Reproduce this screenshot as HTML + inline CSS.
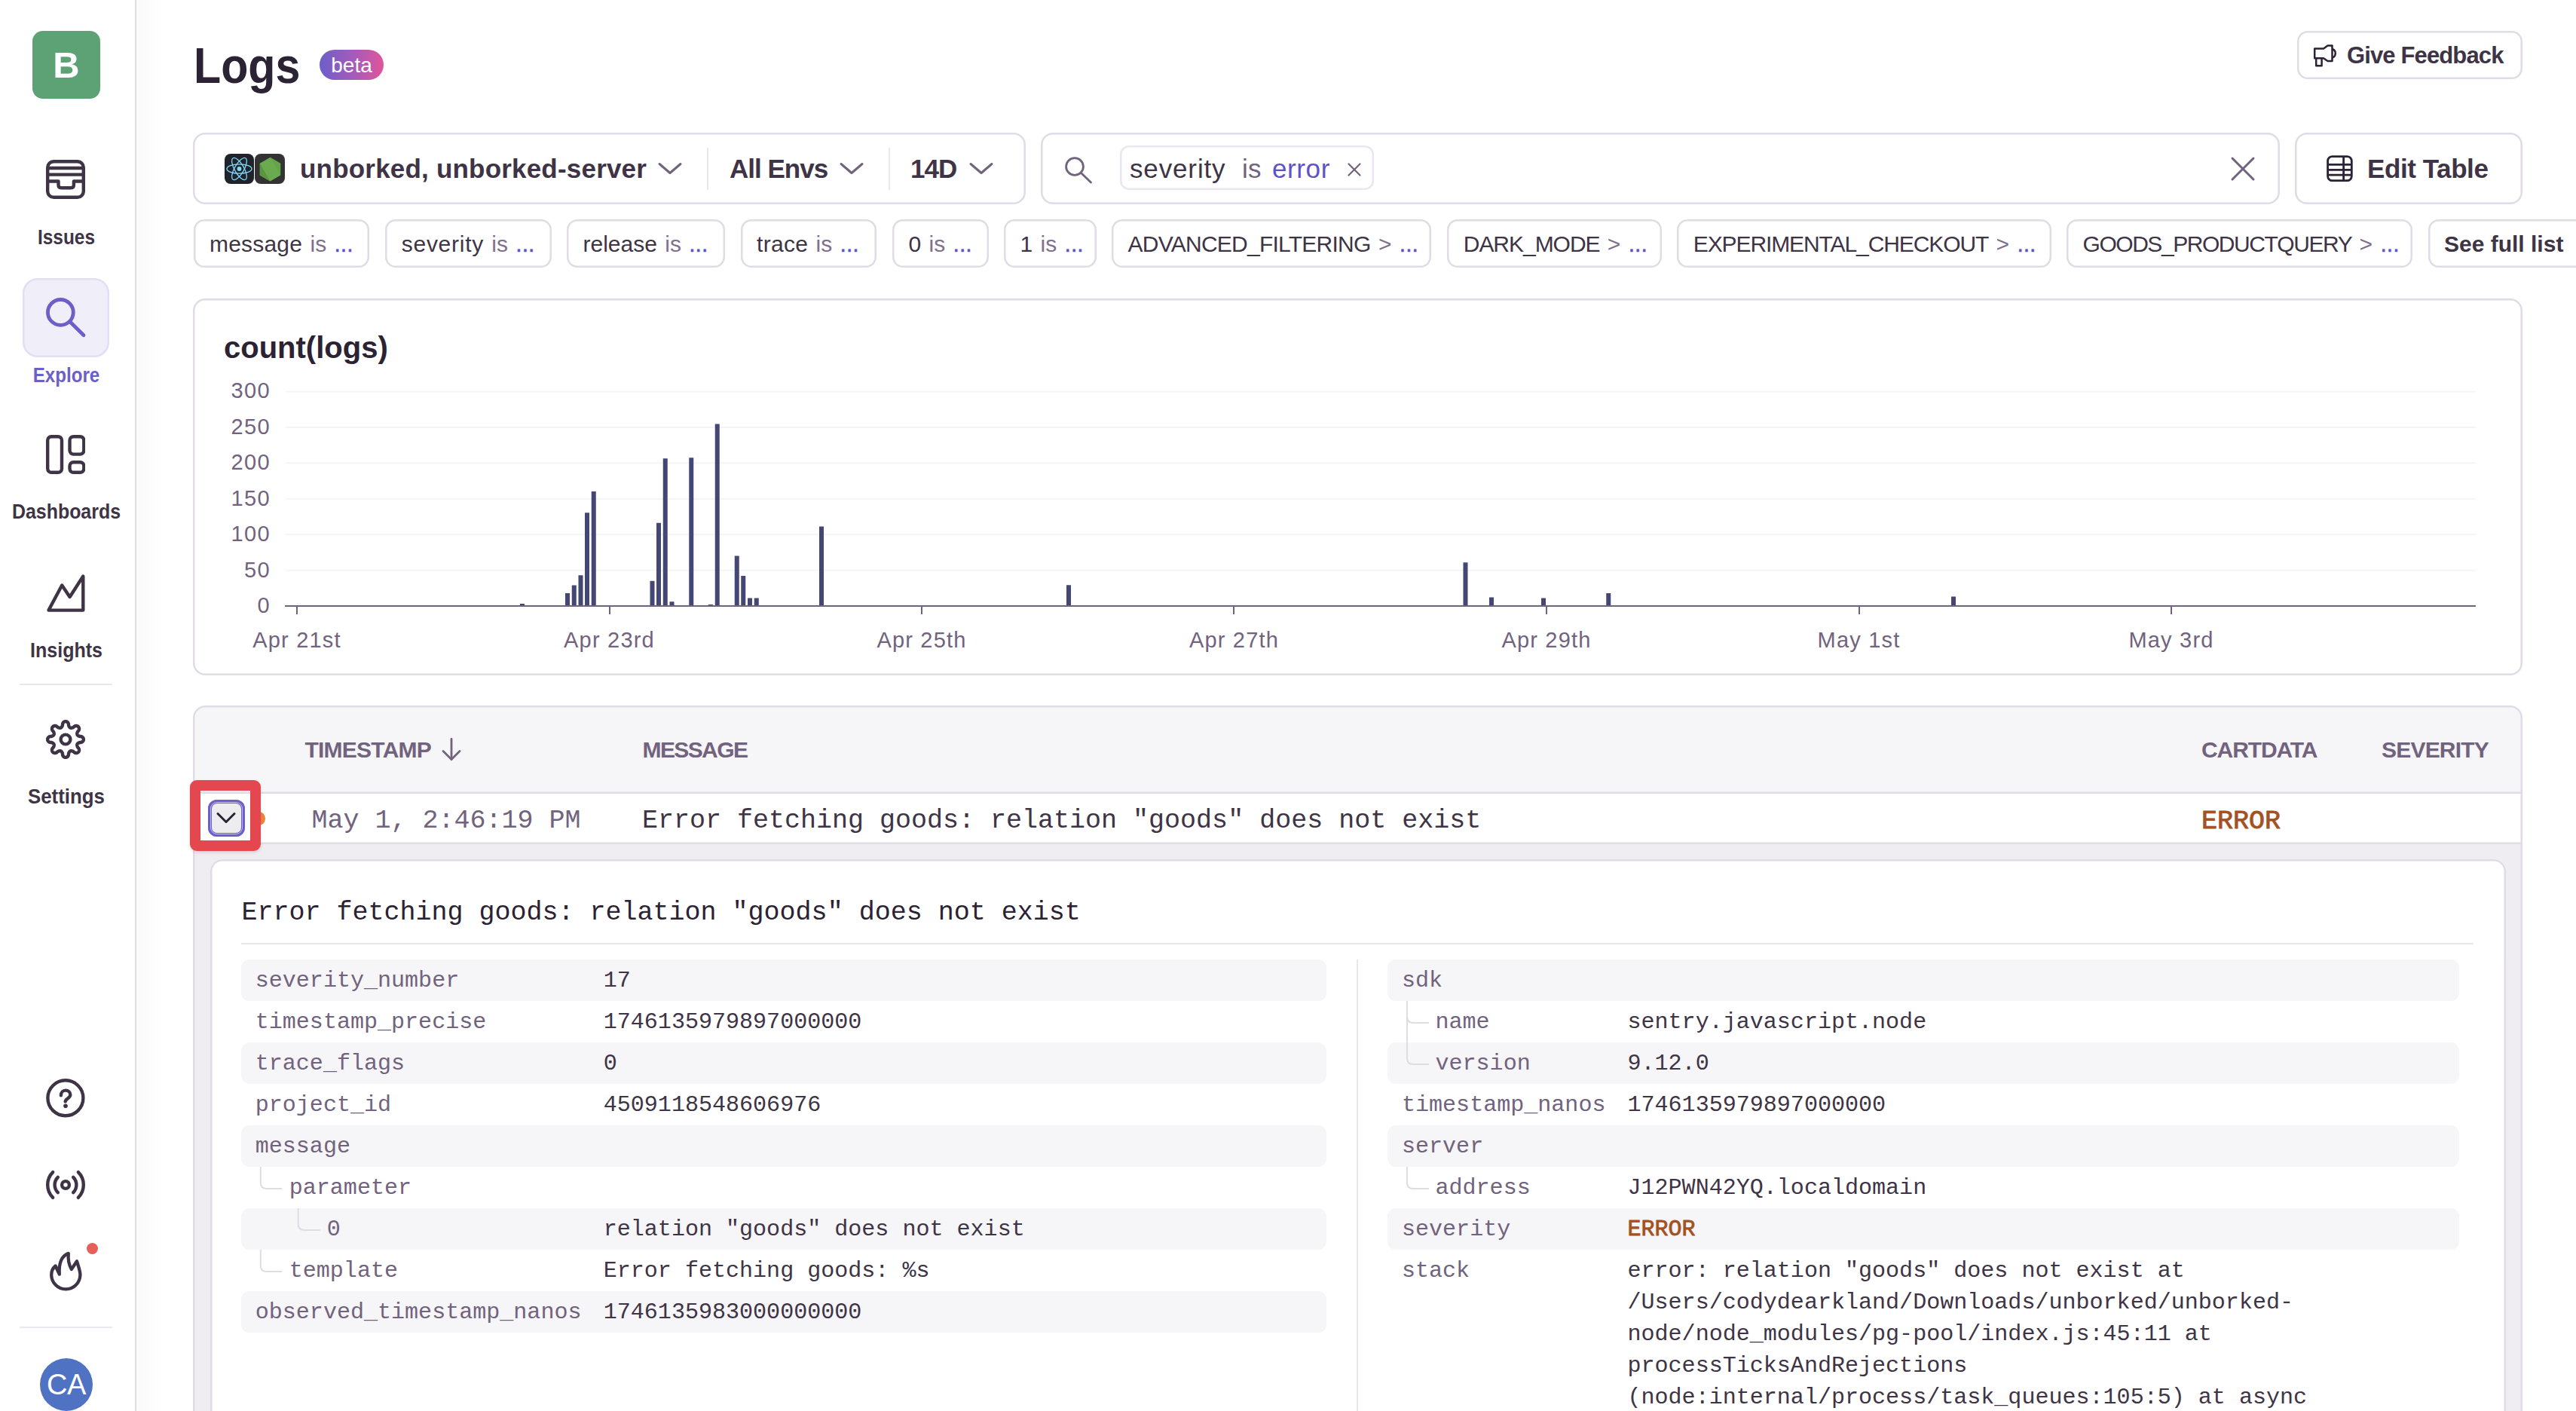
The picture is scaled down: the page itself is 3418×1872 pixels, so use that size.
<!DOCTYPE html><html><head><meta charset="utf-8"><title>Logs</title><style>
html,body{margin:0;padding:0;overflow:hidden;width:3418px;height:1872px;}
body{width:3418px;height:1872px;overflow:hidden;position:relative;background:#fff;font-family:"Liberation Sans",sans-serif;}
.t{position:absolute;white-space:pre;}
.b{position:absolute;box-sizing:border-box;}
#root{position:absolute;left:0;top:0;width:3418px;height:1872px;overflow:hidden;background:#fff;}
</style></head><body><div id="root">
<div class="b" style="left:0px;top:0px;width:179px;height:1872px;background:#fff"></div>
<div class="b" style="left:179px;top:0px;width:2px;height:1872px;background:#E0DCE5"></div>
<div class="b" style="left:181px;top:0px;width:40px;height:1872px;background:linear-gradient(90deg,rgba(0,0,0,0.018),rgba(0,0,0,0))"></div>
<div class="b" style="left:43px;top:41px;width:90px;height:90px;background:#5DA275;border-radius:14px"></div>
<div class="t" style="left:43px;top:41px;width:90px;height:90px;font:700 49px/90px 'Liberation Sans', sans-serif;color:#fff;text-align:center">B</div>
<svg class="b" style="left:61px;top:212px;" width="52" height="52" viewBox="0 0 52 52"><g fill="none" stroke="#3E3446" stroke-width="4.4" stroke-linejoin="round">
<rect x="2.2" y="2.2" width="47.6" height="47.6" rx="8"/>
<line x1="2" y1="11" x2="50" y2="11"/><line x1="2" y1="19.6" x2="50" y2="19.6"/>
<path d="M2,28.5 H16.5 V33.5 Q16.5,37.2 20.5,37.2 H33 Q36.9,37.2 36.9,33.5 V28.5 H50"/></g></svg>
<div class="t" style="left:0.00px;top:300.63px;font:700 27.6px/27.6px 'Liberation Sans', sans-serif;color:#3E3446;letter-spacing:0px;transform:scaleX(0.885);transform-origin:88px 0;width:176px;text-align:center;">Issues</div>
<div class="b" style="left:30px;top:369px;width:115.00px;height:105.00px;background:#F0EEF9;border-radius:20px;box-shadow:inset 0 0 0 2.5px #E3DFF3;"></div>
<svg class="b" style="left:55px;top:390px;" width="62" height="62" viewBox="0 0 62 62"><g fill="none" stroke="#6C5FC7" stroke-width="4.8" stroke-linecap="round">
<circle cx="25.35" cy="24.4" r="16.9"/><line x1="37.5" y1="36.5" x2="56" y2="54.7"/></g></svg>
<div class="t" style="left:0.00px;top:483.63px;font:700 27.6px/27.6px 'Liberation Sans', sans-serif;color:#6C5FC7;letter-spacing:0px;transform:scaleX(0.874);transform-origin:88px 0;width:176px;text-align:center;">Explore</div>
<svg class="b" style="left:61px;top:577px;" width="52" height="52" viewBox="0 0 52 52"><g fill="none" stroke="#3E3446" stroke-width="4.4">
<rect x="2.2" y="2.2" width="18.8" height="47.6" rx="5"/>
<rect x="31.5" y="2.2" width="18.8" height="23.4" rx="5"/>
<rect x="31.5" y="36.2" width="18.8" height="13.6" rx="5"/></g></svg>
<div class="t" style="left:0.00px;top:664.63px;font:700 27.6px/27.6px 'Liberation Sans', sans-serif;color:#3E3446;letter-spacing:0px;transform:scaleX(0.903);transform-origin:88px 0;width:176px;text-align:center;">Dashboards</div>
<svg class="b" style="left:61px;top:760px;" width="52" height="52" viewBox="0 0 52 52"><path d="M3.5,49.6 L21.2,16.5 L31.6,32 L49.3,4.5 V49.6 Z" fill="none" stroke="#3E3446" stroke-width="4.4" stroke-linejoin="round"/></svg>
<div class="t" style="left:0.00px;top:848.63px;font:700 27.6px/27.6px 'Liberation Sans', sans-serif;color:#3E3446;letter-spacing:0px;transform:scaleX(0.907);transform-origin:88px 0;width:176px;text-align:center;">Insights</div>
<div class="b" style="left:26px;top:907px;width:123px;height:2px;background:#EBE7F0"></div>
<svg class="b" style="left:61px;top:955px;" width="52" height="52" viewBox="0 0 52 52"><g fill="none" stroke="#3E3446" stroke-width="4.4" stroke-linejoin="round"><path d="M49.90,26.00 L49.88,26.38 L49.82,26.75 L49.72,27.12 L49.58,27.48 L49.40,27.84 L49.17,28.19 L48.91,28.53 L48.60,28.85 L48.23,29.16 L47.81,29.45 L47.30,29.72 L46.61,29.93 L45.21,29.98 L44.52,30.14 L44.01,30.32 L43.57,30.51 L43.19,30.70 L42.86,30.90 L42.56,31.09 L42.29,31.29 L42.06,31.50 L41.86,31.71 L41.69,31.93 L41.54,32.15 L41.43,32.39 L41.34,32.64 L41.28,32.90 L41.25,33.18 L41.24,33.47 L41.26,33.78 L41.31,34.11 L41.38,34.46 L41.48,34.83 L41.62,35.24 L41.79,35.68 L42.03,36.17 L42.40,36.77 L43.36,37.79 L43.69,38.43 L43.86,38.98 L43.96,39.48 L44.00,39.96 L43.99,40.41 L43.94,40.84 L43.85,41.24 L43.72,41.62 L43.56,41.98 L43.37,42.31 L43.15,42.62 L42.90,42.90 L42.62,43.15 L42.31,43.37 L41.98,43.56 L41.62,43.72 L41.24,43.85 L40.84,43.94 L40.41,43.99 L39.96,44.00 L39.48,43.96 L38.98,43.86 L38.43,43.69 L37.79,43.36 L36.77,42.40 L36.17,42.03 L35.68,41.79 L35.24,41.62 L34.83,41.48 L34.46,41.38 L34.11,41.31 L33.78,41.26 L33.47,41.24 L33.18,41.25 L32.90,41.28 L32.64,41.34 L32.39,41.43 L32.15,41.54 L31.93,41.69 L31.71,41.86 L31.50,42.06 L31.29,42.29 L31.09,42.56 L30.90,42.86 L30.70,43.19 L30.51,43.57 L30.32,44.01 L30.14,44.52 L29.98,45.21 L29.93,46.61 L29.72,47.30 L29.45,47.81 L29.16,48.23 L28.85,48.60 L28.53,48.91 L28.19,49.17 L27.84,49.40 L27.48,49.58 L27.12,49.72 L26.75,49.82 L26.38,49.88 L26.00,49.90 L25.62,49.88 L25.25,49.82 L24.88,49.72 L24.52,49.58 L24.16,49.40 L23.81,49.17 L23.47,48.91 L23.15,48.60 L22.84,48.23 L22.55,47.81 L22.28,47.30 L22.07,46.61 L22.02,45.21 L21.86,44.52 L21.68,44.01 L21.49,43.57 L21.30,43.19 L21.10,42.86 L20.91,42.56 L20.71,42.29 L20.50,42.06 L20.29,41.86 L20.07,41.69 L19.85,41.54 L19.61,41.43 L19.36,41.34 L19.10,41.28 L18.82,41.25 L18.53,41.24 L18.22,41.26 L17.89,41.31 L17.54,41.38 L17.17,41.48 L16.76,41.62 L16.32,41.79 L15.83,42.03 L15.23,42.40 L14.21,43.36 L13.57,43.69 L13.02,43.86 L12.52,43.96 L12.04,44.00 L11.59,43.99 L11.16,43.94 L10.76,43.85 L10.38,43.72 L10.02,43.56 L9.69,43.37 L9.38,43.15 L9.10,42.90 L8.85,42.62 L8.63,42.31 L8.44,41.98 L8.28,41.62 L8.15,41.24 L8.06,40.84 L8.01,40.41 L8.00,39.96 L8.04,39.48 L8.14,38.98 L8.31,38.43 L8.64,37.79 L9.60,36.77 L9.97,36.17 L10.21,35.68 L10.38,35.24 L10.52,34.83 L10.62,34.46 L10.69,34.11 L10.74,33.78 L10.76,33.47 L10.75,33.18 L10.72,32.90 L10.66,32.64 L10.57,32.39 L10.46,32.15 L10.31,31.93 L10.14,31.71 L9.94,31.50 L9.71,31.29 L9.44,31.09 L9.14,30.90 L8.81,30.70 L8.43,30.51 L7.99,30.32 L7.48,30.14 L6.79,29.98 L5.39,29.93 L4.70,29.72 L4.19,29.45 L3.77,29.16 L3.40,28.85 L3.09,28.53 L2.83,28.19 L2.60,27.84 L2.42,27.48 L2.28,27.12 L2.18,26.75 L2.12,26.38 L2.10,26.00 L2.12,25.62 L2.18,25.25 L2.28,24.88 L2.42,24.52 L2.60,24.16 L2.83,23.81 L3.09,23.47 L3.40,23.15 L3.77,22.84 L4.19,22.55 L4.70,22.28 L5.39,22.07 L6.79,22.02 L7.48,21.86 L7.99,21.68 L8.43,21.49 L8.81,21.30 L9.14,21.10 L9.44,20.91 L9.71,20.71 L9.94,20.50 L10.14,20.29 L10.31,20.07 L10.46,19.85 L10.57,19.61 L10.66,19.36 L10.72,19.10 L10.75,18.82 L10.76,18.53 L10.74,18.22 L10.69,17.89 L10.62,17.54 L10.52,17.17 L10.38,16.76 L10.21,16.32 L9.97,15.83 L9.60,15.23 L8.64,14.21 L8.31,13.57 L8.14,13.02 L8.04,12.52 L8.00,12.04 L8.01,11.59 L8.06,11.16 L8.15,10.76 L8.28,10.38 L8.44,10.02 L8.63,9.69 L8.85,9.38 L9.10,9.10 L9.38,8.85 L9.69,8.63 L10.02,8.44 L10.38,8.28 L10.76,8.15 L11.16,8.06 L11.59,8.01 L12.04,8.00 L12.52,8.04 L13.02,8.14 L13.57,8.31 L14.21,8.64 L15.23,9.60 L15.83,9.97 L16.32,10.21 L16.76,10.38 L17.17,10.52 L17.54,10.62 L17.89,10.69 L18.22,10.74 L18.53,10.76 L18.82,10.75 L19.10,10.72 L19.36,10.66 L19.61,10.57 L19.85,10.46 L20.07,10.31 L20.29,10.14 L20.50,9.94 L20.71,9.71 L20.91,9.44 L21.10,9.14 L21.30,8.81 L21.49,8.43 L21.68,7.99 L21.86,7.48 L22.02,6.79 L22.07,5.39 L22.28,4.70 L22.55,4.19 L22.84,3.77 L23.15,3.40 L23.47,3.09 L23.81,2.83 L24.16,2.60 L24.52,2.42 L24.88,2.28 L25.25,2.18 L25.62,2.12 L26.00,2.10 L26.38,2.12 L26.75,2.18 L27.12,2.28 L27.48,2.42 L27.84,2.60 L28.19,2.83 L28.53,3.09 L28.85,3.40 L29.16,3.77 L29.45,4.19 L29.72,4.70 L29.93,5.39 L29.98,6.79 L30.14,7.48 L30.32,7.99 L30.51,8.43 L30.70,8.81 L30.90,9.14 L31.09,9.44 L31.29,9.71 L31.50,9.94 L31.71,10.14 L31.93,10.31 L32.15,10.46 L32.39,10.57 L32.64,10.66 L32.90,10.72 L33.18,10.75 L33.47,10.76 L33.78,10.74 L34.11,10.69 L34.46,10.62 L34.83,10.52 L35.24,10.38 L35.68,10.21 L36.17,9.97 L36.77,9.60 L37.79,8.64 L38.43,8.31 L38.98,8.14 L39.48,8.04 L39.96,8.00 L40.41,8.01 L40.84,8.06 L41.24,8.15 L41.62,8.28 L41.98,8.44 L42.31,8.63 L42.62,8.85 L42.90,9.10 L43.15,9.38 L43.37,9.69 L43.56,10.02 L43.72,10.38 L43.85,10.76 L43.94,11.16 L43.99,11.59 L44.00,12.04 L43.96,12.52 L43.86,13.02 L43.69,13.57 L43.36,14.21 L42.40,15.23 L42.03,15.83 L41.79,16.32 L41.62,16.76 L41.48,17.17 L41.38,17.54 L41.31,17.89 L41.26,18.22 L41.24,18.53 L41.25,18.82 L41.28,19.10 L41.34,19.36 L41.43,19.61 L41.54,19.85 L41.69,20.07 L41.86,20.29 L42.06,20.50 L42.29,20.71 L42.56,20.91 L42.86,21.10 L43.19,21.30 L43.57,21.49 L44.01,21.68 L44.52,21.86 L45.21,22.02 L46.61,22.07 L47.30,22.28 L47.81,22.55 L48.23,22.84 L48.60,23.15 L48.91,23.47 L49.17,23.81 L49.40,24.16 L49.58,24.52 L49.72,24.88 L49.82,25.25 L49.88,25.62 L49.90,26.00Z"/><circle cx="26" cy="26" r="6.4"/></g></svg>
<div class="t" style="left:0.00px;top:1043.13px;font:700 27.6px/27.6px 'Liberation Sans', sans-serif;color:#3E3446;letter-spacing:0px;transform:scaleX(0.937);transform-origin:88px 0;width:176px;text-align:center;">Settings</div>
<svg class="b" style="left:61px;top:1431px;" width="52" height="52" viewBox="0 0 52 52"><g fill="none" stroke="#3E3446" stroke-width="4.4" stroke-linecap="round">
<circle cx="25.9" cy="25.8" r="23.5"/>
<path d="M19.9,22.2 C19.9,18.3 22.6,15.6 26,15.6 C29.6,15.6 32.3,18.2 32.3,21.4 C32.3,25.6 25.7,27 25.7,30.4"/></g>
<circle cx="26" cy="36.3" r="2.8" fill="#3E3446"/></svg>
<svg class="b" style="left:57px;top:1542px;" width="60" height="60" viewBox="0 0 60 60"><g fill="none" stroke="#3E3446" stroke-width="4.4" stroke-linecap="round"><path d="M19.82,40.18 A14.4,14.4 0 0 1 19.82,19.82"/><path d="M40.18,19.82 A14.4,14.4 0 0 1 40.18,40.18"/><path d="M13.17,46.83 A23.8,23.8 0 0 1 13.17,13.17"/><path d="M46.83,13.17 A23.8,23.8 0 0 1 46.83,46.83"/><circle cx="30" cy="30" r="4.9"/></g></svg>
<svg class="b" style="left:61px;top:1655px;" width="52" height="62" viewBox="0 0 52 62"><path d="M17.80,35.60 L12.60,24.50 C9.00,27.50 7.20,32.00 7.20,36.20 A19.1,19.1 0 0 0 45.40,36.20 C45.40,31.00 43.00,25.00 41.00,18.30 L33.80,29.00 C30.30,23.00 29.20,15.00 29.80,7.80 C23.00,10.50 16.60,18.00 17.80,35.60 Z" fill="none" stroke="#3E3446" stroke-width="4.3" stroke-linejoin="round"/></svg>
<div class="b" style="left:115px;top:1649px;width:15px;height:15px;background:#E5605A;border-radius:50%"></div>
<div class="b" style="left:26px;top:1760px;width:123px;height:2px;background:#EBE7F0"></div>
<div class="b" style="left:53px;top:1802px;width:70px;height:70px;background:#4F72C3;border-radius:50%"></div>
<div class="t" style="left:53px;top:1802px;width:70px;height:70px;font:400 38px/70px 'Liberation Sans', sans-serif;color:#fff;text-align:center;letter-spacing:-0.5px">CA</div>
<div class="t" style="left:256.50px;top:52.77px;font:700 67px/67px 'Liberation Sans', sans-serif;color:#2B2233;letter-spacing:0px;transform:scaleX(0.884);transform-origin:left;">Logs</div>
<div class="b" style="left:424px;top:66px;width:85px;height:40px;background:linear-gradient(90deg,#6C5FC9 0%,#A75BB9 55%,#E1559B 100%);border-radius:20px"></div>
<div class="t" style="left:424.00px;top:73.29px;font:400 28px/28px 'Liberation Sans', sans-serif;color:#fff;letter-spacing:0px;width:85px;text-align:center;">beta</div>
<div class="b" style="left:3048px;top:41px;width:299.00px;height:64.00px;background:#fff;border-radius:14px;box-shadow:inset 0 0 0 2.5px #E0DCE5;"></div>
<svg class="b" style="left:3066px;top:56px;" width="38" height="36" viewBox="0 0 38 36"><g fill="none" stroke="#2B2233" stroke-width="2.5" stroke-linejoin="round">
<path d="M5.2,8.5 H17 L22.5,4.6 H28.5 V25 H22.5 L17,21.3 H5.2 Z"/>
<path d="M7.2,21.3 V31.3 H14.6 V21.3"/>
<path d="M28.5,9 A6,6 0 0 1 28.5,20.5"/></g></svg>
<div class="t" style="left:3114.00px;top:58.00px;font:700 31px/31px 'Liberation Sans', sans-serif;color:#3E3446;letter-spacing:-0.87px;">Give Feedback</div>
<div class="b" style="left:256px;top:176px;width:1105.00px;height:95.00px;background:#fff;border-radius:16px;box-shadow:inset 0 0 0 2.5px #E0DCE5;"></div>
<div class="b" style="left:298px;top:204px;width:39px;height:40px;background:#20232A;border-radius:8px"></div>
<svg class="b" style="left:298px;top:204px;" width="39" height="40" viewBox="0 0 39 40"><g fill="none" stroke="#7FD8F9" stroke-width="1.3"><ellipse cx="19.5" cy="20" rx="16.5" ry="6.2"/>
<ellipse cx="19.5" cy="20" rx="16.5" ry="6.2" transform="rotate(60 19.5 20)"/><ellipse cx="19.5" cy="20" rx="16.5" ry="6.2" transform="rotate(120 19.5 20)"/></g>
<circle cx="19.5" cy="20" r="2.9" fill="#7FD8F9"/></svg>
<div class="b" style="left:338px;top:204px;width:40px;height:40px;background:#333333;border-radius:8px"></div>
<svg class="b" style="left:338px;top:204px;" width="40" height="40" viewBox="0 0 40 40"><polygon points="20.5,4.8 34.2,12.7 34.2,28.5 20.5,36.4 6.8,28.5 6.8,12.7" fill="#6AAB50"/>
<polygon points="6.8,12.7 20.5,36.4 6.8,28.5" fill="#5A9640"/><polygon points="20.5,4.8 34.2,12.7 34.2,28.5" fill="#62A048" opacity="0.6"/></svg>
<div class="t" style="left:398.00px;top:205.87px;font:700 35px/35px 'Liberation Sans', sans-serif;color:#3E3446;letter-spacing:0.2px;">unborked, unborked-server</div>
<svg class="b" style="left:871.5px;top:213px;" width="34" height="21" viewBox="0 0 34 21"><polyline points="3,4.5 17.0,16.5 31,4.5" fill="none" stroke="#71637E" stroke-width="3" stroke-linecap="round" stroke-linejoin="round"/></svg>
<div class="b" style="left:938px;top:196px;width:2px;height:56px;background:#EBE7F0"></div>
<div class="t" style="left:968.00px;top:206.12px;font:700 35px/35px 'Liberation Sans', sans-serif;color:#3E3446;letter-spacing:-1px;">All Envs</div>
<svg class="b" style="left:1112.5px;top:213px;" width="34" height="21" viewBox="0 0 34 21"><polyline points="3,4.5 17.0,16.5 31,4.5" fill="none" stroke="#71637E" stroke-width="3" stroke-linecap="round" stroke-linejoin="round"/></svg>
<div class="b" style="left:1179px;top:196px;width:2px;height:56px;background:#EBE7F0"></div>
<div class="t" style="left:1208.00px;top:206.27px;font:700 35px/35px 'Liberation Sans', sans-serif;color:#3E3446;letter-spacing:-1px;">14D</div>
<svg class="b" style="left:1284.5px;top:213px;" width="34" height="21" viewBox="0 0 34 21"><polyline points="3,4.5 17.0,16.5 31,4.5" fill="none" stroke="#71637E" stroke-width="3" stroke-linecap="round" stroke-linejoin="round"/></svg>
<div class="b" style="left:1381px;top:176px;width:1644.00px;height:95.00px;background:#fff;border-radius:16px;box-shadow:inset 0 0 0 2.5px #E0DCE5,inset 0 3px 3px rgba(43,34,51,0.03);"></div>
<svg class="b" style="left:1410px;top:205px;" width="42" height="42" viewBox="0 0 42 42"><g fill="none" stroke="#71637E" stroke-width="2.8" stroke-linecap="round"><circle cx="16" cy="16" r="11.4"/><line x1="24.2" y1="24.2" x2="37.5" y2="37"/></g></svg>
<div class="b" style="left:1486px;top:193px;width:337.00px;height:59.00px;background:#fff;border-radius:12px;box-shadow:inset 0 0 0 2.5px #EBE7F0;"></div>
<div class="t" style="left:1499.00px;top:205.87px;font:400 35px/35px 'Liberation Sans', sans-serif;color:#3E3446;letter-spacing:0.86px;">severity</div>
<div class="t" style="left:1648.00px;top:205.87px;font:400 35px/35px 'Liberation Sans', sans-serif;color:#71637E;letter-spacing:0.3px;">is</div>
<div class="t" style="left:1688.00px;top:205.87px;font:400 35px/35px 'Liberation Sans', sans-serif;color:#5E52C9;letter-spacing:0.6px;">error</div>
<svg class="b" style="left:1786px;top:214px;" width="22" height="22" viewBox="0 0 22 22"><g stroke="#71637E" stroke-width="2.2" stroke-linecap="round"><line x1="3.5" y1="3.5" x2="18.5" y2="18.5"/><line x1="18.5" y1="3.5" x2="3.5" y2="18.5"/></g></svg>
<svg class="b" style="left:2957px;top:205px;" width="38" height="38" viewBox="0 0 38 38"><g stroke="#71637E" stroke-width="3" stroke-linecap="round"><line x1="5" y1="5" x2="33" y2="33"/><line x1="33" y1="5" x2="5" y2="33"/></g></svg>
<div class="b" style="left:3045px;top:176px;width:302.00px;height:95.00px;background:#fff;border-radius:16px;box-shadow:inset 0 0 0 2.5px #E0DCE5;"></div>
<svg class="b" style="left:3084px;top:203px;" width="41" height="41" viewBox="0 0 41 41"><g fill="none" stroke="#2B2233" stroke-width="2.8"><rect x="4.6" y="4.6" width="31.7" height="32.1" rx="6"/>
<line x1="4.6" y1="15.4" x2="36.3" y2="15.4"/><line x1="4.6" y1="22.3" x2="36.3" y2="22.3"/><line x1="4.6" y1="29.2" x2="36.3" y2="29.2"/>
<line x1="25.6" y1="4.6" x2="25.6" y2="36.7"/></g></svg>
<div class="t" style="left:3141.00px;top:206.12px;font:700 35px/35px 'Liberation Sans', sans-serif;color:#3E3446;letter-spacing:-0.42px;">Edit Table</div>
<div class="b" style="left:257px;top:291px;width:233.00px;height:64.00px;background:#fff;border-radius:14px;box-shadow:inset 0 0 0 2.5px #E0DCE5;"></div>
<div class="t" style="left:278.00px;top:309.10px;font:400 30px/30px 'Liberation Sans', sans-serif;color:#3E3446;word-spacing:2px"><span style="letter-spacing:0.2px">message</span> <span style="color:#80708F">is</span> <span style="color:#5B4FD0;-webkit-text-stroke:0.5px #5B4FD0">...</span></div>
<div class="b" style="left:511px;top:291px;width:221.00px;height:64.00px;background:#fff;border-radius:14px;box-shadow:inset 0 0 0 2.5px #E0DCE5;"></div>
<div class="t" style="left:532.75px;top:309.10px;font:400 30px/30px 'Liberation Sans', sans-serif;color:#3E3446;word-spacing:2px"><span style="letter-spacing:0.73px">severity</span> <span style="color:#80708F">is</span> <span style="color:#5B4FD0;-webkit-text-stroke:0.5px #5B4FD0">...</span></div>
<div class="b" style="left:752px;top:291px;width:210.00px;height:64.00px;background:#fff;border-radius:14px;box-shadow:inset 0 0 0 2.5px #E0DCE5;"></div>
<div class="t" style="left:773.50px;top:309.10px;font:400 30px/30px 'Liberation Sans', sans-serif;color:#3E3446;word-spacing:2px"><span style="letter-spacing:0px">release</span> <span style="color:#80708F">is</span> <span style="color:#5B4FD0;-webkit-text-stroke:0.5px #5B4FD0">...</span></div>
<div class="b" style="left:983px;top:291px;width:180.00px;height:64.00px;background:#fff;border-radius:14px;box-shadow:inset 0 0 0 2.5px #E0DCE5;"></div>
<div class="t" style="left:1004.00px;top:309.10px;font:400 30px/30px 'Liberation Sans', sans-serif;color:#3E3446;word-spacing:2px"><span style="letter-spacing:0.3px">trace</span> <span style="color:#80708F">is</span> <span style="color:#5B4FD0;-webkit-text-stroke:0.5px #5B4FD0">...</span></div>
<div class="b" style="left:1184px;top:291px;width:128.00px;height:64.00px;background:#fff;border-radius:14px;box-shadow:inset 0 0 0 2.5px #E0DCE5;"></div>
<div class="t" style="left:1205.50px;top:309.10px;font:400 30px/30px 'Liberation Sans', sans-serif;color:#3E3446;word-spacing:2px"><span style="letter-spacing:0px">0</span> <span style="color:#80708F">is</span> <span style="color:#5B4FD0;-webkit-text-stroke:0.5px #5B4FD0">...</span></div>
<div class="b" style="left:1332px;top:291px;width:123.00px;height:64.00px;background:#fff;border-radius:14px;box-shadow:inset 0 0 0 2.5px #E0DCE5;"></div>
<div class="t" style="left:1353.50px;top:309.10px;font:400 30px/30px 'Liberation Sans', sans-serif;color:#3E3446;word-spacing:2px"><span style="letter-spacing:0px">1</span> <span style="color:#80708F">is</span> <span style="color:#5B4FD0;-webkit-text-stroke:0.5px #5B4FD0">...</span></div>
<div class="b" style="left:1475px;top:291px;width:424.00px;height:64.00px;background:#fff;border-radius:14px;box-shadow:inset 0 0 0 2.5px #E0DCE5;"></div>
<div class="t" style="left:1496.50px;top:309.10px;font:400 30px/30px 'Liberation Sans', sans-serif;color:#3E3446;word-spacing:2px"><span style="letter-spacing:-0.75px">ADVANCED_FILTERING</span> <span style="color:#80708F">&gt;</span> <span style="color:#5B4FD0;-webkit-text-stroke:0.5px #5B4FD0">...</span></div>
<div class="b" style="left:1920px;top:291px;width:285.00px;height:64.00px;background:#fff;border-radius:14px;box-shadow:inset 0 0 0 2.5px #E0DCE5;"></div>
<div class="t" style="left:1941.75px;top:309.10px;font:400 30px/30px 'Liberation Sans', sans-serif;color:#3E3446;word-spacing:2px"><span style="letter-spacing:-1.03px">DARK_MODE</span> <span style="color:#80708F">&gt;</span> <span style="color:#5B4FD0;-webkit-text-stroke:0.5px #5B4FD0">...</span></div>
<div class="b" style="left:2225px;top:291px;width:497.00px;height:64.00px;background:#fff;border-radius:14px;box-shadow:inset 0 0 0 2.5px #E0DCE5;"></div>
<div class="t" style="left:2246.75px;top:309.10px;font:400 30px/30px 'Liberation Sans', sans-serif;color:#3E3446;word-spacing:2px"><span style="letter-spacing:-1.1px">EXPERIMENTAL_CHECKOUT</span> <span style="color:#80708F">&gt;</span> <span style="color:#5B4FD0;-webkit-text-stroke:0.5px #5B4FD0">...</span></div>
<div class="b" style="left:2742px;top:291px;width:459.00px;height:64.00px;background:#fff;border-radius:14px;box-shadow:inset 0 0 0 2.5px #E0DCE5;"></div>
<div class="t" style="left:2763.50px;top:309.10px;font:400 30px/30px 'Liberation Sans', sans-serif;color:#3E3446;word-spacing:2px"><span style="letter-spacing:-1.45px">GOODS_PRODUCTQUERY</span> <span style="color:#80708F">&gt;</span> <span style="color:#5B4FD0;-webkit-text-stroke:0.5px #5B4FD0">...</span></div>
<div class="b" style="left:3222px;top:291px;width:278.00px;height:64.00px;background:#fff;border-radius:14px;box-shadow:inset 0 0 0 2.5px #E0DCE5;"></div>
<div class="t" style="left:3243.00px;top:309.10px;font:700 30px/30px 'Liberation Sans', sans-serif;color:#3E3446;letter-spacing:0px;">See full list</div>
<div class="b" style="left:256px;top:396px;width:3091.00px;height:500.00px;background:#fff;border-radius:16px;box-shadow:inset 0 0 0 2.5px #E0DCE5;"></div>
<div class="t" style="left:297.00px;top:441.13px;font:700 40px/40px 'Liberation Sans', sans-serif;color:#2B2233;letter-spacing:0px;">count(logs)</div>
<div class="t" style="left:200.00px;top:504.45px;font:400 29px/29px 'Liberation Sans', sans-serif;color:#71637E;letter-spacing:1.4px;width:159px;text-align:right;">300</div>
<div class="t" style="left:200.00px;top:551.87px;font:400 29px/29px 'Liberation Sans', sans-serif;color:#71637E;letter-spacing:1.4px;width:159px;text-align:right;">250</div>
<div class="t" style="left:200.00px;top:599.29px;font:400 29px/29px 'Liberation Sans', sans-serif;color:#71637E;letter-spacing:1.4px;width:159px;text-align:right;">200</div>
<div class="t" style="left:200.00px;top:646.71px;font:400 29px/29px 'Liberation Sans', sans-serif;color:#71637E;letter-spacing:1.4px;width:159px;text-align:right;">150</div>
<div class="t" style="left:200.00px;top:694.13px;font:400 29px/29px 'Liberation Sans', sans-serif;color:#71637E;letter-spacing:1.4px;width:159px;text-align:right;">100</div>
<div class="t" style="left:200.00px;top:741.55px;font:400 29px/29px 'Liberation Sans', sans-serif;color:#71637E;letter-spacing:1.4px;width:159px;text-align:right;">50</div>
<div class="t" style="left:200.00px;top:788.97px;font:400 29px/29px 'Liberation Sans', sans-serif;color:#71637E;letter-spacing:1.4px;width:159px;text-align:right;">0</div>
<svg class="b" style="left:379px;top:397px;" width="2906" height="450" viewBox="0 0 2906 450"><rect x="0" y="121.50" width="2906" height="2" fill="#F5F4F7"/><rect x="0" y="168.92" width="2906" height="2" fill="#F5F4F7"/><rect x="0" y="216.34" width="2906" height="2" fill="#F5F4F7"/><rect x="0" y="263.76" width="2906" height="2" fill="#F5F4F7"/><rect x="0" y="311.18" width="2906" height="2" fill="#F5F4F7"/><rect x="0" y="358.60" width="2906" height="2" fill="#F5F4F7"/></svg>
<div class="b" style="left:378px;top:803px;width:2907px;height:2px;background:#71637E"></div>
<div class="b" style="left:393px;top:805px;width:2px;height:10px;background:#71637E"></div>
<div class="t" style="left:294.00px;top:835.45px;font:400 29px/29px 'Liberation Sans', sans-serif;color:#71637E;letter-spacing:1.2px;width:200px;text-align:center;">Apr 21st</div>
<div class="b" style="left:808px;top:805px;width:2px;height:10px;background:#71637E"></div>
<div class="t" style="left:708.50px;top:835.45px;font:400 29px/29px 'Liberation Sans', sans-serif;color:#71637E;letter-spacing:1.2px;width:200px;text-align:center;">Apr 23rd</div>
<div class="b" style="left:1222px;top:805px;width:2px;height:10px;background:#71637E"></div>
<div class="t" style="left:1123.00px;top:835.45px;font:400 29px/29px 'Liberation Sans', sans-serif;color:#71637E;letter-spacing:1.2px;width:200px;text-align:center;">Apr 25th</div>
<div class="b" style="left:1636px;top:805px;width:2px;height:10px;background:#71637E"></div>
<div class="t" style="left:1537.50px;top:835.45px;font:400 29px/29px 'Liberation Sans', sans-serif;color:#71637E;letter-spacing:1.2px;width:200px;text-align:center;">Apr 27th</div>
<div class="b" style="left:2051px;top:805px;width:2px;height:10px;background:#71637E"></div>
<div class="t" style="left:1952.00px;top:835.45px;font:400 29px/29px 'Liberation Sans', sans-serif;color:#71637E;letter-spacing:1.2px;width:200px;text-align:center;">Apr 29th</div>
<div class="b" style="left:2466px;top:805px;width:2px;height:10px;background:#71637E"></div>
<div class="t" style="left:2366.50px;top:835.45px;font:400 29px/29px 'Liberation Sans', sans-serif;color:#71637E;letter-spacing:1.2px;width:200px;text-align:center;">May 1st</div>
<div class="b" style="left:2880px;top:805px;width:2px;height:10px;background:#71637E"></div>
<div class="t" style="left:2781.00px;top:835.45px;font:400 29px/29px 'Liberation Sans', sans-serif;color:#71637E;letter-spacing:1.2px;width:200px;text-align:center;">May 3rd</div>
<svg class="b" style="left:380px;top:380px;" width="2300" height="430" viewBox="0 0 2300 430"><rect x="310.00" y="421.00" width="6" height="2.00" fill="#444674"/><rect x="370.00" y="407.00" width="6" height="16.00" fill="#444674"/><rect x="378.75" y="396.50" width="6" height="26.50" fill="#444674"/><rect x="387.50" y="383.25" width="6" height="39.75" fill="#444674"/><rect x="396.00" y="300.25" width="6" height="122.75" fill="#444674"/><rect x="404.75" y="272.00" width="6" height="151.00" fill="#444674"/><rect x="482.50" y="390.75" width="6" height="32.25" fill="#444674"/><rect x="491.00" y="313.75" width="6" height="109.25" fill="#444674"/><rect x="499.75" y="228.25" width="6" height="194.75" fill="#444674"/><rect x="508.50" y="418.25" width="6" height="4.75" fill="#444674"/><rect x="534.25" y="227.25" width="6" height="195.75" fill="#444674"/><rect x="560.00" y="422.00" width="6" height="1.00" fill="#444674"/><rect x="568.75" y="182.50" width="6" height="240.50" fill="#444674"/><rect x="594.75" y="357.50" width="6" height="65.50" fill="#444674"/><rect x="603.25" y="384.00" width="6" height="39.00" fill="#444674"/><rect x="612.00" y="413.50" width="6" height="9.50" fill="#444674"/><rect x="620.75" y="413.50" width="6" height="9.50" fill="#444674"/><rect x="707.00" y="318.50" width="6" height="104.50" fill="#444674"/><rect x="1035.00" y="396.25" width="6" height="26.75" fill="#444674"/><rect x="1561.50" y="366.25" width="6" height="56.75" fill="#444674"/><rect x="1596.00" y="412.50" width="6" height="10.50" fill="#444674"/><rect x="1665.00" y="413.50" width="6" height="9.50" fill="#444674"/><rect x="1751.25" y="407.00" width="6" height="16.00" fill="#444674"/><rect x="2209.00" y="411.50" width="6" height="11.50" fill="#444674"/></svg>
<div class="b" style="left:256px;top:936px;width:3091px;height:1000px;border-radius:16px;background:#EFEDF2;overflow:hidden"><div class="b" style="left:0;top:0;width:100%;height:116.5px;background:#F6F5F8;box-shadow:inset 0 -2.5px 0 #E0DCE5"></div><div class="b" style="left:0;top:116.5px;width:100%;height:67px;background:#fff;box-shadow:inset 0 -2.5px 0 #E0DCE5"></div><div class="b" style="left:0;top:0;width:100%;height:100%;border-radius:16px;box-shadow:inset 0 0 0 2.5px #E0DCE5"></div></div>
<div class="t" style="left:404.50px;top:979.60px;font:700 30px/30px 'Liberation Sans', sans-serif;color:#71637E;letter-spacing:-0.77px;">TIMESTAMP</div>
<svg class="b" style="left:584px;top:977px;" width="30" height="35" viewBox="0 0 30 35"><g fill="none" stroke="#71637E" stroke-width="2.8" stroke-linecap="round" stroke-linejoin="round"><line x1="15" y1="3.5" x2="15" y2="30.5"/><polyline points="4,19.5 15,30.5 26,19.5"/></g></svg>
<div class="t" style="left:852.50px;top:979.60px;font:700 30px/30px 'Liberation Sans', sans-serif;color:#71637E;letter-spacing:-1.6px;">MESSAGE</div>
<div class="t" style="left:2921.00px;top:979.60px;font:700 30px/30px 'Liberation Sans', sans-serif;color:#71637E;letter-spacing:-1.1px;">CARTDATA</div>
<div class="t" style="left:3160.00px;top:979.60px;font:700 30px/30px 'Liberation Sans', sans-serif;color:#71637E;letter-spacing:-0.8px;">SEVERITY</div>
<div class="t" style="left:413.50px;top:1072.44px;font:400 35px/35px 'Liberation Mono', monospace;color:#71637E;letter-spacing:0px;">May 1, 2:46:19 PM</div>
<div class="t" style="left:852.00px;top:1072.44px;font:400 35px/35px 'Liberation Mono', monospace;color:#3E3446;letter-spacing:0px;">Error fetching goods: relation "goods" does not exist</div>
<div class="t" style="left:2921.00px;top:1073.19px;font:400 35px/35px 'Liberation Mono', monospace;color:#A4511F;letter-spacing:0px;-webkit-text-stroke:0.9px #A4511F;">ERROR</div>
<div class="b" style="left:334.5px;top:1077px;width:17.5px;height:17.5px;background:#EE8440;border-radius:50%"></div>
<div class="b" style="left:275.5px;top:1060.5px;width:49px;height:49px;background:#EDECEF;border-radius:12px;box-shadow:inset 0 0 0 3px #6C5FC7,inset 0 0 0 3.9px #C9C3EE,inset 0 0 0 5px #6C5FC7"></div>
<svg class="b" style="left:286px;top:1075px;" width="28" height="20" viewBox="0 0 28 20"><polyline points="3,4.5 14.0,15.5 25,4.5" fill="none" stroke="#2B2233" stroke-width="3" stroke-linecap="round" stroke-linejoin="round"/></svg>
<div class="b" style="left:252px;top:1035px;width:94px;height:94px;border:14px solid #E5474E;border-radius:9px;box-shadow:0 2px 4px rgba(0,0,0,0.12)"></div>
<div class="b" style="left:279px;top:1140px;width:3046.00px;height:900.00px;background:#fff;border-radius:16px;box-shadow:inset 0 0 0 2.5px #E0DCE5;"></div>
<div class="t" style="left:320.50px;top:1193.94px;font:400 35px/35px 'Liberation Mono', monospace;color:#2B2233;letter-spacing:0px;">Error fetching goods: relation "goods" does not exist</div>
<div class="b" style="left:320px;top:1251px;width:2962px;height:2px;background:#EBE7F0"></div>
<div class="b" style="left:1799.5px;top:1273px;width:2px;height:700px;background:#EBE7F0"></div>
<div class="b" style="left:320px;top:1273px;width:1440px;height:55px;background:#F6F5F8;border-radius:11px"></div>
<div class="b" style="left:320px;top:1383px;width:1440px;height:55px;background:#F6F5F8;border-radius:11px"></div>
<div class="b" style="left:320px;top:1493px;width:1440px;height:55px;background:#F6F5F8;border-radius:11px"></div>
<div class="b" style="left:320px;top:1603px;width:1440px;height:55px;background:#F6F5F8;border-radius:11px"></div>
<div class="b" style="left:320px;top:1713px;width:1440px;height:55px;background:#F6F5F8;border-radius:11px"></div>
<div class="b" style="left:1841px;top:1273px;width:1421.5px;height:55px;background:#F6F5F8;border-radius:11px"></div>
<div class="b" style="left:1841px;top:1383px;width:1421.5px;height:55px;background:#F6F5F8;border-radius:11px"></div>
<div class="b" style="left:1841px;top:1493px;width:1421.5px;height:55px;background:#F6F5F8;border-radius:11px"></div>
<div class="b" style="left:1841px;top:1603px;width:1421.5px;height:55px;background:#F6F5F8;border-radius:11px"></div>
<div class="t" style="left:338.75px;top:1286.47px;font:400 30.06px/30.06px 'Liberation Mono', monospace;color:#71637E;letter-spacing:0px;">severity_number</div>
<div class="t" style="left:800.75px;top:1286.47px;font:400 30.06px/30.06px 'Liberation Mono', monospace;color:#3E3446;letter-spacing:0px;">17</div>
<div class="t" style="left:338.75px;top:1341.47px;font:400 30.06px/30.06px 'Liberation Mono', monospace;color:#71637E;letter-spacing:0px;">timestamp_precise</div>
<div class="t" style="left:800.75px;top:1341.47px;font:400 30.06px/30.06px 'Liberation Mono', monospace;color:#3E3446;letter-spacing:0px;">1746135979897000000</div>
<div class="t" style="left:338.75px;top:1396.47px;font:400 30.06px/30.06px 'Liberation Mono', monospace;color:#71637E;letter-spacing:0px;">trace_flags</div>
<div class="t" style="left:800.75px;top:1396.47px;font:400 30.06px/30.06px 'Liberation Mono', monospace;color:#3E3446;letter-spacing:0px;">0</div>
<div class="t" style="left:338.75px;top:1451.47px;font:400 30.06px/30.06px 'Liberation Mono', monospace;color:#71637E;letter-spacing:0px;">project_id</div>
<div class="t" style="left:800.75px;top:1451.47px;font:400 30.06px/30.06px 'Liberation Mono', monospace;color:#3E3446;letter-spacing:0px;">4509118548606976</div>
<div class="t" style="left:338.75px;top:1506.47px;font:400 30.06px/30.06px 'Liberation Mono', monospace;color:#71637E;letter-spacing:0px;">message</div>
<div class="t" style="left:383.75px;top:1561.47px;font:400 30.06px/30.06px 'Liberation Mono', monospace;color:#71637E;letter-spacing:0px;">parameter</div>
<div class="t" style="left:433.75px;top:1616.47px;font:400 30.06px/30.06px 'Liberation Mono', monospace;color:#71637E;letter-spacing:0px;">0</div>
<div class="t" style="left:800.75px;top:1616.47px;font:400 30.06px/30.06px 'Liberation Mono', monospace;color:#3E3446;letter-spacing:0px;">relation &quot;goods&quot; does not exist</div>
<div class="t" style="left:383.75px;top:1671.47px;font:400 30.06px/30.06px 'Liberation Mono', monospace;color:#71637E;letter-spacing:0px;">template</div>
<div class="t" style="left:800.75px;top:1671.47px;font:400 30.06px/30.06px 'Liberation Mono', monospace;color:#3E3446;letter-spacing:0px;">Error fetching goods: %s</div>
<div class="t" style="left:338.75px;top:1726.47px;font:400 30.06px/30.06px 'Liberation Mono', monospace;color:#71637E;letter-spacing:0px;">observed_timestamp_nanos</div>
<div class="t" style="left:800.75px;top:1726.47px;font:400 30.06px/30.06px 'Liberation Mono', monospace;color:#3E3446;letter-spacing:0px;">1746135983000000000</div>
<svg class="b" style="left:0px;top:0px;pointer-events:none" width="3418" height="1872" viewBox="0 0 3418 1872"><path d="M345.8,1548 V1569 Q345.8,1577 353.8,1577 H374" fill="none" stroke="#E0DCE5" stroke-width="2"/><path d="M395.7,1603 V1624 Q395.7,1632 403.7,1632 H424.7" fill="none" stroke="#E0DCE5" stroke-width="2"/><path d="M345.8,1658 V1679 Q345.8,1687 353.8,1687 H374" fill="none" stroke="#E0DCE5" stroke-width="2"/><path d="M1867,1328 V1349 Q1867,1357 1875,1357 H1896" fill="none" stroke="#E0DCE5" stroke-width="2"/><path d="M1867,1328 V1404 Q1867,1412 1875,1412 H1896" fill="none" stroke="#E0DCE5" stroke-width="2"/><path d="M1867,1548 V1569 Q1867,1577 1875,1577 H1896" fill="none" stroke="#E0DCE5" stroke-width="2"/></svg>
<div class="t" style="left:1860.00px;top:1286.47px;font:400 30.06px/30.06px 'Liberation Mono', monospace;color:#71637E;letter-spacing:0px;">sdk</div>
<div class="t" style="left:1904.50px;top:1341.47px;font:400 30.06px/30.06px 'Liberation Mono', monospace;color:#71637E;letter-spacing:0px;">name</div>
<div class="t" style="left:2159.50px;top:1341.47px;font:400 30.06px/30.06px 'Liberation Mono', monospace;color:#3E3446;letter-spacing:0px;">sentry.javascript.node</div>
<div class="t" style="left:1904.50px;top:1396.47px;font:400 30.06px/30.06px 'Liberation Mono', monospace;color:#71637E;letter-spacing:0px;">version</div>
<div class="t" style="left:2159.50px;top:1396.47px;font:400 30.06px/30.06px 'Liberation Mono', monospace;color:#3E3446;letter-spacing:0px;">9.12.0</div>
<div class="t" style="left:1860.00px;top:1451.47px;font:400 30.06px/30.06px 'Liberation Mono', monospace;color:#71637E;letter-spacing:0px;">timestamp_nanos</div>
<div class="t" style="left:2159.50px;top:1451.47px;font:400 30.06px/30.06px 'Liberation Mono', monospace;color:#3E3446;letter-spacing:0px;">1746135979897000000</div>
<div class="t" style="left:1860.00px;top:1506.47px;font:400 30.06px/30.06px 'Liberation Mono', monospace;color:#71637E;letter-spacing:0px;">server</div>
<div class="t" style="left:1904.50px;top:1561.47px;font:400 30.06px/30.06px 'Liberation Mono', monospace;color:#71637E;letter-spacing:0px;">address</div>
<div class="t" style="left:2159.50px;top:1561.47px;font:400 30.06px/30.06px 'Liberation Mono', monospace;color:#3E3446;letter-spacing:0px;">J12PWN42YQ.localdomain</div>
<div class="t" style="left:1860.00px;top:1616.47px;font:400 30.06px/30.06px 'Liberation Mono', monospace;color:#71637E;letter-spacing:0px;">severity</div>
<div class="t" style="left:1860.00px;top:1671.47px;font:400 30.06px/30.06px 'Liberation Mono', monospace;color:#71637E;letter-spacing:0px;">stack</div>
<div class="t" style="left:2159.50px;top:1616.47px;font:400 30.06px/30.06px 'Liberation Mono', monospace;color:#A4511F;letter-spacing:0px;-webkit-text-stroke:0.8px #A4511F;">ERROR</div>
<div class="t" style="left:2159.50px;top:1671.47px;font:400 30.06px/30.06px 'Liberation Mono', monospace;color:#3E3446;letter-spacing:0px;">error: relation &quot;goods&quot; does not exist at</div>
<div class="t" style="left:2159.50px;top:1713.37px;font:400 30.06px/30.06px 'Liberation Mono', monospace;color:#3E3446;letter-spacing:0px;">/Users/codydearkland/Downloads/unborked/unborked-</div>
<div class="t" style="left:2159.50px;top:1755.27px;font:400 30.06px/30.06px 'Liberation Mono', monospace;color:#3E3446;letter-spacing:0px;">node/node_modules/pg-pool/index.js:45:11 at</div>
<div class="t" style="left:2159.50px;top:1797.17px;font:400 30.06px/30.06px 'Liberation Mono', monospace;color:#3E3446;letter-spacing:0px;">processTicksAndRejections</div>
<div class="t" style="left:2159.50px;top:1839.07px;font:400 30.06px/30.06px 'Liberation Mono', monospace;color:#3E3446;letter-spacing:0px;">(node:internal/process/task_queues:105:5) at async</div>
</div></body></html>
